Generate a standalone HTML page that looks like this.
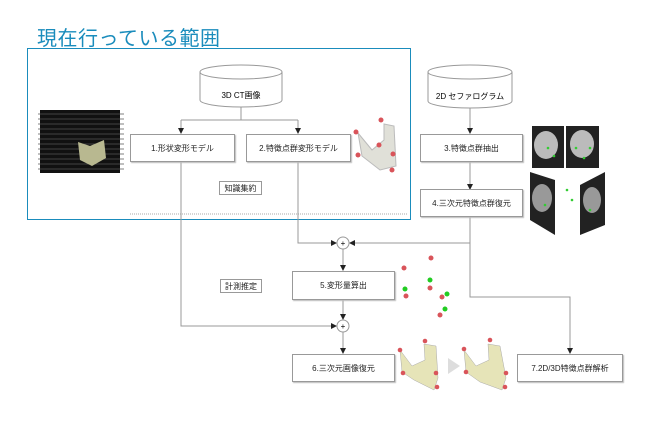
<!DOCTYPE html><html><head><meta charset="utf-8"><style>
body{margin:0;background:#fff;width:661px;height:427px;overflow:hidden;position:relative;font-family:"Liberation Sans","Noto Sans CJK JP",sans-serif}
.t{position:absolute;left:37px;top:22px;font-size:20px;color:#1a8cbc;letter-spacing:0.5px}
.b{position:absolute;border:1px solid #999;box-shadow:1px 1px 1px #bbb;background:#fff;font-size:8px;color:#222;display:flex;align-items:center;justify-content:center;box-sizing:border-box}
svg{position:absolute;left:0;top:0}
</style></head><body>
<div class="t">現在行っている範囲</div>
<svg width="661" height="427" viewBox="0 0 661 427">
<defs><marker id="a" markerWidth="6" markerHeight="6" refX="5" refY="3" orient="auto"><path d="M0,0L6,3L0,6z" fill="#222"/></marker></defs>
<rect x="27.5" y="48.5" width="383" height="171" fill="none" stroke="#1a8cbc" stroke-width="1"/>
<line x1="130" y1="214" x2="408" y2="214" stroke="#aaa" stroke-dasharray="1,1"/>
<g fill="none" stroke="#999">
<path d="M200,72 A41,7 0 0 1 282,72 V100 A41,7 0 0 1 200,100 Z" fill="#fff"/><path d="M200,72 A41,7 0 0 0 282,72"/>
<path d="M428,72 A42,7 0 0 1 512,72 V101 A42,7 0 0 1 428,101 Z" fill="#fff"/><path d="M428,72 A42,7 0 0 0 512,72"/>
<path d="M241,107V120M181,120H298" />
<path d="M181,120V133" marker-end="url(#a)"/><path d="M298,120V133" marker-end="url(#a)"/>
<path d="M470,108V133" marker-end="url(#a)"/><path d="M470,161V189" marker-end="url(#a)"/>
<path d="M470,216V297H570V353" marker-end="url(#a)"/>
<path d="M470,243H350" marker-end="url(#a)"/>
<path d="M298,162V243H336" marker-end="url(#a)"/>
<path d="M343,249V270" marker-end="url(#a)"/>
<path d="M343,299V319" marker-end="url(#a)"/>
<path d="M181,162V326H336" marker-end="url(#a)"/>
<path d="M343,332V353" marker-end="url(#a)"/>
<circle cx="343" cy="243" r="6" fill="#fff"/><circle cx="343" cy="326" r="6" fill="#fff"/>
</g>
<text x="343" y="246" font-size="8" text-anchor="middle">+</text><text x="343" y="329" font-size="8" text-anchor="middle">+</text>
<g>
<rect x="40" y="110" width="80" height="63" fill="#111"/>
<g stroke="#555" stroke-width="0.7"><path d="M38,114H124M38,119H124M38,124H124M38,129H124M38,134H124M38,139H124M38,144H124M38,149H124M38,154H124M38,159H124M38,164H124M38,169H124"/></g>
<path d="M78,142 L90,146 L104,140 L106,158 L92,166 L80,160Z" fill="#b8b890"/>
</g>
<g fill="#e0e0d8" stroke="#bbb"><path d="M358,133 L372,150 L384,140 L384,124 L394,126 L396,166 L380,170 L362,156Z"/></g>
<g fill="#d9545a"><circle cx="356" cy="132" r="2.5"/><circle cx="381" cy="120" r="2.5"/><circle cx="379" cy="145" r="2.5"/><circle cx="358" cy="155" r="2.5"/><circle cx="393" cy="154" r="2.5"/><circle cx="392" cy="170" r="2.5"/></g>
<rect x="532" y="126" width="32" height="42" fill="#222"/><rect x="566" y="126" width="33" height="42" fill="#222"/>
<ellipse cx="546" cy="145" rx="12" ry="14" fill="#bbb"/><ellipse cx="582" cy="144" rx="12" ry="14" fill="#bbb"/>
<path d="M530,172 L555,180 L555,235 L530,220Z" fill="#222"/><path d="M605,172 L580,185 L580,235 L605,225Z" fill="#222"/>
<ellipse cx="542" cy="198" rx="10" ry="14" fill="#999"/><ellipse cx="592" cy="200" rx="9" ry="13" fill="#999"/>
<g fill="#3c3"><circle cx="548" cy="148" r="1.3"/><circle cx="554" cy="156" r="1.3"/><circle cx="576" cy="148" r="1.3"/><circle cx="590" cy="148" r="1.3"/><circle cx="584" cy="158" r="1.3"/><circle cx="545" cy="205" r="1.3"/><circle cx="567" cy="190" r="1.3"/><circle cx="572" cy="200" r="1.3"/><circle cx="590" cy="210" r="1.3"/></g>
<g fill="#d9545a"><circle cx="404" cy="268" r="2.5"/><circle cx="431" cy="258" r="2.5"/><circle cx="430" cy="288" r="2.5"/><circle cx="406" cy="296" r="2.5"/><circle cx="442" cy="297" r="2.5"/><circle cx="440" cy="315" r="2.5"/></g>
<g fill="#2c2"><circle cx="405" cy="289" r="2.5"/><circle cx="430" cy="280" r="2.5"/><circle cx="447" cy="294" r="2.5"/><circle cx="445" cy="309" r="2.5"/></g>
<g fill="#e6e4b8" stroke="#aaa" stroke-width="0.5"><path d="M400,350 L412,366 L425,360 L424,344 L436,346 L438,378 L434,390 L414,380 L402,372Z"/><path d="M464,350 L476,366 L489,360 L488,344 L500,346 L506,378 L502,390 L480,382 L466,372Z"/></g>
<g fill="#d9545a"><circle cx="400" cy="350" r="2.3"/><circle cx="425" cy="341" r="2.3"/><circle cx="403" cy="373" r="2.3"/><circle cx="436" cy="373" r="2.3"/><circle cx="437" cy="387" r="2.3"/><circle cx="464" cy="349" r="2.3"/><circle cx="490" cy="340" r="2.3"/><circle cx="466" cy="372" r="2.3"/><circle cx="506" cy="373" r="2.3"/><circle cx="505" cy="387" r="2.3"/></g>
<path d="M448,358 L460,366 L448,374Z" fill="#ddd"/>
</svg>
<div style="position:absolute;left:200px;top:90px;width:82px;text-align:center;font-size:8px">3D CT画像</div>
<div style="position:absolute;left:428px;top:91px;width:84px;text-align:center;font-size:8px">2D セファログラム</div>
<div class="b" style="left:130px;top:134px;width:105px;height:28px">1.形状変形モデル</div>
<div class="b" style="left:246px;top:134px;width:105px;height:28px">2.特徴点群変形モデル</div>
<div class="b" style="left:420px;top:134px;width:103px;height:28px">3.特徴点群抽出</div>
<div class="b" style="left:420px;top:189px;width:103px;height:28px">4.三次元特徴点群復元</div>
<div class="b" style="left:219px;top:181px;width:43px;height:14px;box-shadow:none">知識集約</div>
<div class="b" style="left:220px;top:279px;width:42px;height:14px;box-shadow:none">計測推定</div>
<div class="b" style="left:292px;top:271px;width:103px;height:29px">5.変形量算出</div>
<div class="b" style="left:292px;top:354px;width:103px;height:28px">6.三次元画像復元</div>
<div class="b" style="left:517px;top:354px;width:106px;height:28px">7.2D/3D特徴点群解析</div>
</body></html>
